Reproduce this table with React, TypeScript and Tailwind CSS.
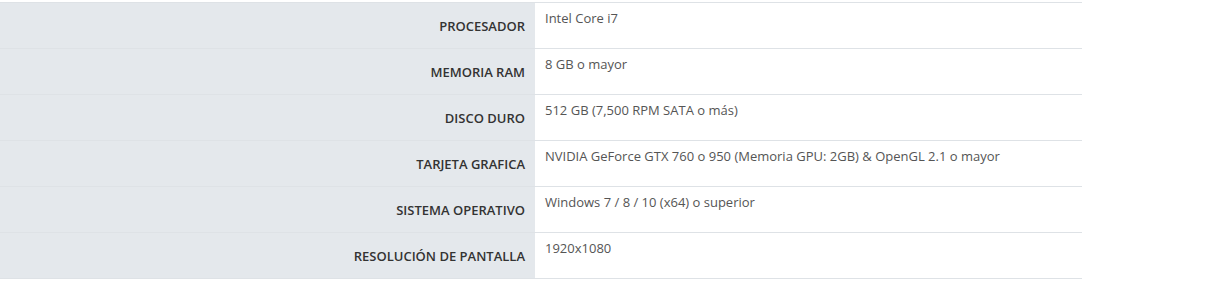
import React from "react";

const rows: [string, string][] = [
  ["PROCESADOR", "Intel Core i7"],
  ["MEMORIA RAM", "8 GB o mayor"],
  ["DISCO DURO", "512 GB (7,500 RPM SATA o más)"],
  ["TARJETA GRAFICA", "NVIDIA GeForce GTX 760 o 950 (Memoria GPU: 2GB) & OpenGL 2.1 o mayor"],
  ["SISTEMA OPERATIVO", "Windows 7 / 8 / 10 (x64) o superior"],
  ["RESOLUCIÓN DE PANTALLA", "1920x1080"],
];

export default function App() {
  return (
    <div className="w-[1226px] h-[281px] bg-white pt-[2px]" style={{ fontFamily: '"Open Sans", sans-serif' }}>
      <div className="w-[1082px] border-b border-[#dee2e6]">
        {rows.map(([k, v]) => (
          <div key={k} className="flex h-[46px] border-t border-[#dee2e6]">
            <div className="w-[535px] bg-[#e4e8ec] flex items-center justify-end pr-[10px] pt-[3px] text-[13px] font-semibold text-[#333]">
              {k}
            </div>
            <div className="flex-1 pl-[10px] pt-[5px] text-[13px] leading-[20px] text-[#555]">{v}</div>
          </div>
        ))}
      </div>
    </div>
  );
}
